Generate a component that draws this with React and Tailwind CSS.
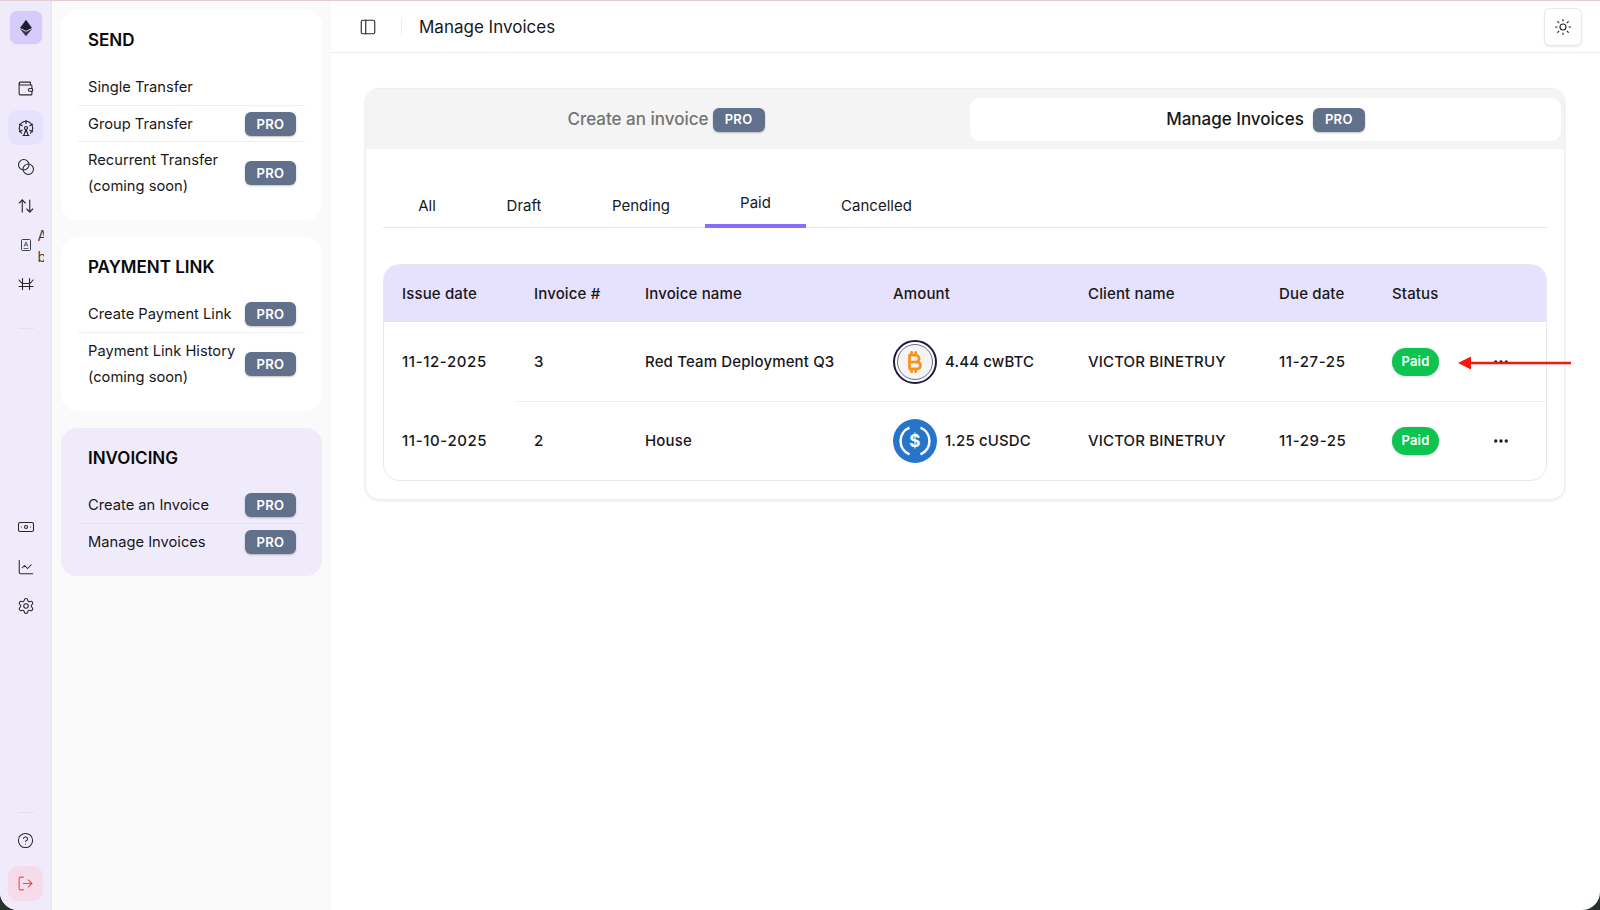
import React from 'react';
import {
  Wallet,
  FerrisWheel,
  Blend,
  ArrowUpDown,
  Banknote,
  ChartLine,
  Settings,
  CircleHelp,
  LogOut,
  Sun,
  PanelLeft,
  Ellipsis,
} from 'lucide-react';
import { FaBitcoinSign } from 'react-icons/fa6';

const ProBadge = ({ className = 'w-[51px] h-6 text-[13px]' }) => (
  <span className={`inline-flex items-center justify-center shrink-0 rounded-md bg-[#61718c] text-white font-semibold tracking-[0.3px] shadow-[0_1px_2px_rgba(0,0,0,0.25)] ${className}`}>
    PRO
  </span>
);

const EthLogo = () => (
  <svg width="12" height="18" viewBox="0 0 14 19">
    <polygon points="7,0 14,9.4 7,12.6 0,9.4" fill="#1f1b2e" />
    <polygon points="7,14 14,10.6 7,19 0,10.6" fill="#3a3548" />
  </svg>
);

// address book, small box with an A inside
const ContactIcon = () => (
  <svg width="14" height="14" viewBox="0 0 14 14" fill="none" stroke="#3f3f46" strokeWidth="1">
    <rect x="2.5" y="1.5" width="9" height="11" rx="1" />
    <path d="M5 8.5 7 4l2 4.5M5.7 7h2.6M4.5 10.5h5" strokeWidth="0.8" />
  </svg>
);

const BridgeIcon = () => (
  <svg width="18" height="18" viewBox="0 0 18 18" fill="none" stroke="#27272a" strokeWidth="1.1" strokeLinecap="round">
    <path d="M5.5 3.5v11M12.5 3.5v11M2 11.5h14M2 5c1.5 2 2.5 3 3.5 3.5h7C13.5 8 14.5 7 16 5" />
  </svg>
);

const RailItem = ({ active, children }) => (
  <div className={`relative w-[35px] h-[35px] rounded-[10px] flex items-center justify-center text-[#27272a] ${active ? 'bg-[#e6e1fd]' : ''}`}>
    {children}
  </div>
);

const Rail = () => (
  <aside className="w-[52px] shrink-0 h-full bg-[#f0ebfb] border-r border-[#e6e3ee] flex flex-col items-center pt-[10px] pb-[9px]">
    <div className="w-[32px] h-[33px] rounded-lg bg-[#d5ccfb] flex items-center justify-center shadow-[0_0_1px_rgba(0,0,0,0.2)]">
      <EthLogo />
    </div>
    <div className="mt-[27px] flex flex-col gap-[4.2px]">
      <RailItem><Wallet size={17} strokeWidth={1.5} /></RailItem>
      <RailItem active><FerrisWheel size={18} strokeWidth={1.6} /></RailItem>
      <RailItem><Blend size={18} strokeWidth={1.4} /></RailItem>
      <RailItem><ArrowUpDown size={18} strokeWidth={1.5} /></RailItem>
      <RailItem>
        <ContactIcon />
        {/* label clipped by the collapsed rail */}
        <div className="absolute left-[29.5px] top-[-3px] w-[6px] overflow-hidden text-[14px] leading-[21px] text-[#3f3f46] font-['Inter',sans-serif]">
          <div>A</div>
          <div>b</div>
        </div>
      </RailItem>
      <RailItem><BridgeIcon /></RailItem>
    </div>
    <div className="mt-[26px] w-4 h-px bg-[#e4e0ea]" />
    <div className="mt-[181px] flex flex-col gap-[4.2px]">
      <RailItem><Banknote size={18} strokeWidth={1.4} /></RailItem>
      <RailItem><ChartLine size={18} strokeWidth={1.4} /></RailItem>
      <RailItem><Settings size={18} strokeWidth={1.4} /></RailItem>
    </div>
    <div className="mt-auto w-4 h-px bg-[#e4e0ea]" />
    <div className="mt-[10px]">
      <RailItem><CircleHelp size={17} strokeWidth={1.5} /></RailItem>
    </div>
    <div className="mt-[8px] w-[35px] h-[35px] rounded-[10px] bg-[#f5dcea] flex items-center justify-center text-[#f04a4f]">
      <LogOut size={17} strokeWidth={1.5} />
    </div>
  </aside>
);

const MenuRow = ({ label, pro, sub, divider = 'border-[#f0f0f0]' }) => (
  <div className={`flex items-center justify-between pl-[10px] pr-[9px] text-[14.7px] leading-[26px] text-[#18181b] border-t first:border-t-0 ${divider} ${sub ? 'h-[62px]' : 'h-9'}`}>
    <div>
      <div>{label}</div>
      {sub && <div>{sub}</div>}
    </div>
    {pro && <ProBadge />}
  </div>
);

const MenuCard = ({ title, active, children }) => (
  <section className={`rounded-[16px] px-[17px] pt-4 pb-[17px] ${active ? 'bg-[#f0ebfb]' : 'bg-white'}`}>
    <h2 className="pl-[10px] text-[17px] leading-7 font-semibold text-[#09090b] mb-[15px]">{title}</h2>
    <div>{children}</div>
  </section>
);

const Sidebar = () => (
  <aside className="w-[279px] shrink-0 h-full bg-[#fafafa] px-[9px] pt-[9px] flex flex-col gap-[17px]">
    <MenuCard title="SEND">
      <MenuRow label="Single Transfer" />
      <MenuRow label="Group Transfer" pro />
      <MenuRow label="Recurrent Transfer" sub="(coming soon)" pro />
    </MenuCard>
    <MenuCard title="PAYMENT LINK">
      <MenuRow label="Create Payment Link" pro />
      <MenuRow label="Payment Link History" sub="(coming soon)" pro />
    </MenuCard>
    <MenuCard title="INVOICING" active>
      <MenuRow label="Create an Invoice" pro divider="border-[#e7e2f2]" />
      <MenuRow label="Manage Invoices" pro divider="border-[#e7e2f2]" />
    </MenuCard>
  </aside>
);

const BtcCoin = () => (
  <div className="w-11 h-11 shrink-0 rounded-full border-2 border-[#1d1a3d] bg-white p-[2px]">
    <div className="w-full h-full rounded-full border border-[#6f6a86] bg-[#f4f4f5] flex items-center justify-center text-[#f7931a]">
      <FaBitcoinSign size={22} />
    </div>
  </div>
);

const UsdcCoin = () => (
  <svg width="44" height="44" viewBox="0 0 44 44" className="shrink-0">
    <circle cx="22" cy="22" r="22" fill="#2775ca" />
    <path d="M16.5 8.6a14.5 14.5 0 0 0 0 26.8M27.5 8.6a14.5 14.5 0 0 1 0 26.8" fill="none" stroke="#fff" strokeWidth="2.6" />
    <text x="22" y="28" textAnchor="middle" fontFamily="Inter, sans-serif" fontSize="17" fontWeight="700" fill="#fff">$</text>
  </svg>
);

const columns = 'grid grid-cols-[150px_111px_248px_195px_191px_113px_1fr] items-center';

const rows = [
  { date: '11-12-2025', no: '3', name: 'Red Team Deployment Q3', coin: <BtcCoin />, amount: '4.44 cwBTC', client: 'VICTOR BINETRUY', due: '11-27-25' },
  { date: '11-10-2025', no: '2', name: 'House', coin: <UsdcCoin />, amount: '1.25 cUSDC', client: 'VICTOR BINETRUY', due: '11-29-25' },
];

const InvoiceTable = () => (
  <div className="mt-[36px] rounded-[16px] border border-[#e8e8e8] overflow-hidden text-[15px] tracking-[0.14px] text-[#18181b] font-medium">
    <div className={`${columns} h-[57px] bg-[#e6e1fd]`}>
      {['Issue date', 'Invoice #', 'Invoice name', 'Amount', 'Client name', 'Due date', 'Status'].map((h, i) => (
        <div key={h} className={i === 0 ? 'pl-[18px] pt-[2px]' : 'pt-[2px]'}>{h}</div>
      ))}
    </div>
    {rows.map((r, idx) => (
      <div key={r.no} className={`${columns} h-[79px] relative`}>
        {idx > 0 && <div className="absolute top-0 left-[132px] right-0 h-px bg-[#f0f0f0]" />}
        <div className="pl-[18px] pt-[2px] tracking-[0.6px]">{r.date}</div>
        <div className="pt-[2px]">{r.no}</div>
        <div className="pt-[2px]">{r.name}</div>
        <div className="flex items-center gap-[8px]">{r.coin}<span className="pt-[2px]">{r.amount}</span></div>
        <div className="pt-[2px]">{r.client}</div>
        <div className="pt-[2px] tracking-[0.6px]">{r.due}</div>
        <div className="flex items-center">
          <span className="w-[47px] h-7 rounded-full bg-[#0cc44f] text-white text-[13px] font-semibold flex items-center justify-center shadow-[0_0_2px_rgba(0,0,0,0.2)]">Paid</span>
          <Ellipsis size={18} strokeWidth={2.4} className="ml-[53px] text-[#18181b]" />
        </div>
      </div>
    ))}
  </div>
);

const Tab = ({ label, active, className }) => (
  <div className={`h-[43px] flex items-center justify-center text-[15px] text-[#18181b] border-b-4 ${active ? 'border-[#8a6cff] pb-[2px]' : 'border-transparent pt-[4px]'} ${className}`}>
    {label}
  </div>
);

const App = () => (
  <div className="relative w-[1600px] h-[910px] bg-[#26332d] overflow-hidden font-['Inter',sans-serif]">
    <div className="w-full h-full rounded-b-[18px] overflow-hidden bg-white flex border-t border-[#e3ccd4]">
      <Rail />
      <Sidebar />
      <main className="flex-1 min-w-0 flex flex-col">
        <header className="h-[52px] shrink-0 border-b border-[#ececec] flex items-center pl-[28px] pr-[18px]">
          <PanelLeft size={18} strokeWidth={1.5} className="text-[#27272a]" />
          <div className="ml-[24px] w-px h-[18px] bg-[#ededed]" />
          <h1 className="ml-[17px] mt-[3px] text-[17px] text-[#18181b]">Manage Invoices</h1>
          <button className="ml-auto w-[38px] h-[38px] rounded-md border border-[#e8e8e8] bg-white flex items-center justify-center shadow-[0_1px_2px_rgba(0,0,0,0.08)]">
            <Sun size={18} strokeWidth={1.5} className="text-[#27272a]" />
          </button>
        </header>
        <div className="pl-[34px] pr-[35px] pt-[35px]">
          <div className="rounded-[14px] border border-[#eeeeee] bg-white shadow-[0_1px_3px_rgba(0,0,0,0.08)] overflow-hidden">
            <div className="h-[60px] bg-[#f4f4f4] grid grid-cols-[1fr_591px] items-center pr-[3px]">
              <div className="flex items-center justify-center gap-[4px] pr-[4px] pt-[2px] text-[17px] font-medium text-[#737373]">
                Create an invoice
                <ProBadge className="w-[52px] h-6 text-[13px]" />
              </div>
              <div className="h-[43px] rounded-[10px] bg-white flex items-center justify-center gap-[9px] pt-[2px] text-[17px] font-medium text-[#18181b]">
                Manage Invoices
                <ProBadge className="w-[52px] h-6 text-[13px]" />
              </div>
            </div>
            <div className="px-[17px] pt-[36px] pb-[18px]">
              <div className="flex border-b border-[#e7e7e7] h-[43px]">
                <Tab label="All" className="w-[88px]" />
                <Tab label="Draft" className="w-[106px]" />
                <Tab label="Pending" className="w-[128px]" />
                <Tab label="Paid" active className="w-[101px]" />
                <Tab label="Cancelled" className="w-[141px]" />
              </div>
              <InvoiceTable />
            </div>
          </div>
        </div>
      </main>
    </div>
    {/* annotation arrow drawn on top of the screenshot */}
    <svg width="120" height="16" viewBox="0 0 120 16" className="absolute left-[1454px] top-[355px]">
      <path d="M117 8H14" stroke="#f5170c" strokeWidth="2.5" />
      <path d="M4 8l13-6.5v13z" fill="#f5170c" />
    </svg>
  </div>
);

export default App;
